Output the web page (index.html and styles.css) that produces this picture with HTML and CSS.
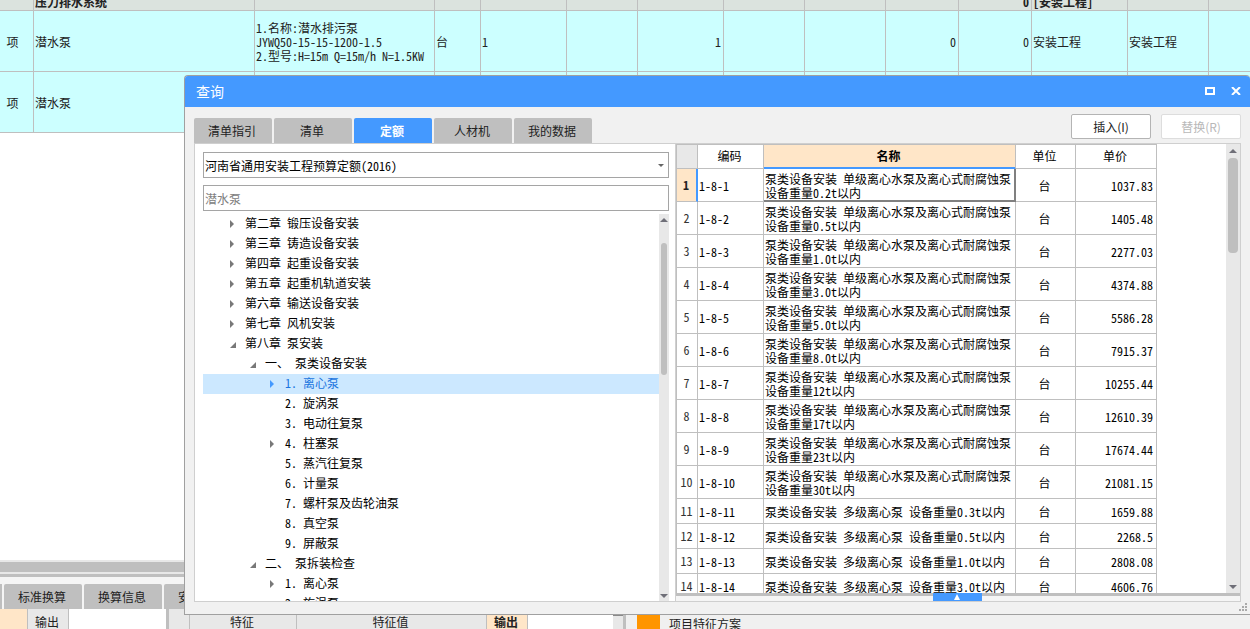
FILE: index.html
```html
<!DOCTYPE html>
<html lang="zh-CN">
<head>
<meta charset="utf-8">
<title>查询</title>
<link rel="stylesheet" href="styles.css">
</head>
<body>
<div class="app">
  <table class="sheet">
    <colgroup>
      <col class="w-kind"><col class="w-name"><col class="w-desc"><col class="w-unit"><col class="w-expr"><col class="w-qty"><col class="w-expr"><col class="w-price"><col class="w-price"><col class="w-sum"><col class="w-sum"><col class="w-major"><col class="w-price"><col>
    </colgroup>
    <tbody>
      <tr class="group"><td></td><td><div class="clip">压力排水系统</div></td><td></td><td></td><td></td><td></td><td></td><td></td><td></td><td></td><td><div class="clip end">0</div></td><td><div class="clip">[安装工程]</div></td><td></td><td></td></tr>
      <tr><td class="mid">项</td><td>潜水泵</td><td>1.名称:潜水排污泵<br>JYWQ50-15-15-1200-1.5<br>2.型号:H=15m Q=15m/h N=1.5KW</td><td>台</td><td>1</td><td></td><td class="right">1</td><td></td><td></td><td class="right">0</td><td class="right">0</td><td>安装工程</td><td>安装工程</td><td></td></tr>
      <tr><td class="mid">项</td><td>潜水泵</td><td></td><td></td><td></td><td></td><td></td><td></td><td></td><td></td><td></td><td></td><td></td><td></td></tr>
    </tbody>
  </table>
  <div class="blank"></div>
  <div class="splitbar"></div>
  <div class="dock-tabs">
    <span class="stub"></span>
    <button class="tab">标准换算</button>
    <button class="tab">换算信息</button>
    <button class="tab">安装费用</button>
  </div>
  <div class="dock">
    <div class="cell peach d-corner"></div>
    <div class="cell d-out">输出</div>
    <div class="d-space"></div>
    <div class="d-bar"></div>
    <div class="cell d-row"></div>
    <div class="cell d-feature">特征</div>
    <div class="cell d-value">特征值</div>
    <div class="cell peach d-export">输出</div>
    <div class="d-fill"></div>
    <div class="d-scroll"></div>
    <div class="d-bar"></div>
    <div class="d-plan"><i class="swatch"></i><span>项目特征方案</span></div>
  </div>
</div>

<section class="dialog" role="dialog" aria-labelledby="dlg-title">
  <header class="titlebar">
    <h1 id="dlg-title">查询</h1>
    <button class="win" aria-label="最大化"><svg width="10" height="8" viewBox="0 0 10 8"><path d="M1 1h8v6H1z" fill="none" stroke="#fff" stroke-width="2"/></svg></button>
    <button class="win" aria-label="关闭"><svg width="10" height="8" viewBox="0 0 10 8"><path d="M1 0l8 8M9 0L1 8" fill="none" stroke="#fff" stroke-width="2"/></svg></button>
  </header>
  <div class="toolbar">
    <nav class="tabs">
      <button class="tab">清单指引</button>
      <button class="tab">清单</button>
      <button class="tab active">定额</button>
      <button class="tab">人材机</button>
      <button class="tab">我的数据</button>
    </nav>
    <div class="actions">
      <button class="btn">插入(I)</button>
      <button class="btn" disabled>替换(R)</button>
    </div>
  </div>
  <div class="panel">
    <div class="left">
      <div class="combo">
        <select class="field" aria-label="定额库"><option>河南省通用安装工程预算定额(2016)</option></select>
        <svg class="caret" width="6" height="3" viewBox="0 0 6 3"><path d="M0 0h6L3 3z" fill="#666"/></svg>
      </div>
      <input class="field" type="text" placeholder="潜水泵" aria-label="搜索">
      <div class="tree-wrap">
        <ul class="tree">
          <li class="l0 shut">第二章 锻压设备安装</li>
          <li class="l0 shut">第三章 铸造设备安装</li>
          <li class="l0 shut">第四章 起重设备安装</li>
          <li class="l0 shut">第五章 起重机轨道安装</li>
          <li class="l0 shut">第六章 输送设备安装</li>
          <li class="l0 shut">第七章 风机安装</li>
          <li class="l0 open">第八章 泵安装</li>
          <li class="l1 open">一、 泵类设备安装</li>
          <li class="l2 shut selected">1. 离心泵</li>
          <li class="l2">2. 旋涡泵</li>
          <li class="l2">3. 电动往复泵</li>
          <li class="l2 shut">4. 柱塞泵</li>
          <li class="l2">5. 蒸汽往复泵</li>
          <li class="l2">6. 计量泵</li>
          <li class="l2">7. 螺杆泵及齿轮油泵</li>
          <li class="l2">8. 真空泵</li>
          <li class="l2">9. 屏蔽泵</li>
          <li class="l1 open">二、 泵拆装检查</li>
          <li class="l2 shut">1. 离心泵</li>
          <li class="l2">2. 旋涡泵</li>
        </ul>
        <div class="scroll narrow">
          <svg width="8" height="4" viewBox="0 0 8 4"><path d="M4 0l4 4H0z" fill="#6f6f78"/></svg>
          <div class="track"><i class="thumb tree-thumb"></i></div>
          <svg width="8" height="4" viewBox="0 0 8 4"><path d="M0 0h8L4 4z" fill="#6f6f78"/></svg>
        </div>
      </div>
    </div>
    <div class="right-pane">
      <div class="grid-wrap">
        <div class="grid-view">
          <table class="grid">
            <colgroup><col class="g-no"><col class="g-code"><col class="g-name"><col class="g-unit"><col class="g-price"></colgroup>
            <thead><tr><th class="corner"></th><th>编码</th><th class="current">名称</th><th>单位</th><th>单价</th></tr></thead>
            <tbody>
              <tr class="picked"><th>1</th><td>1-8-1</td><td class="focus">泵类设备安装 单级离心水泵及离心式耐腐蚀泵 设备重量0.2t以内</td><td>台</td><td>1037.83</td></tr>
              <tr><th>2</th><td>1-8-2</td><td>泵类设备安装 单级离心水泵及离心式耐腐蚀泵 设备重量0.5t以内</td><td>台</td><td>1405.48</td></tr>
              <tr><th>3</th><td>1-8-3</td><td>泵类设备安装 单级离心水泵及离心式耐腐蚀泵 设备重量1.0t以内</td><td>台</td><td>2277.03</td></tr>
              <tr><th>4</th><td>1-8-4</td><td>泵类设备安装 单级离心水泵及离心式耐腐蚀泵 设备重量3.0t以内</td><td>台</td><td>4374.88</td></tr>
              <tr><th>5</th><td>1-8-5</td><td>泵类设备安装 单级离心水泵及离心式耐腐蚀泵 设备重量5.0t以内</td><td>台</td><td>5586.28</td></tr>
              <tr><th>6</th><td>1-8-6</td><td>泵类设备安装 单级离心水泵及离心式耐腐蚀泵 设备重量8.0t以内</td><td>台</td><td>7915.37</td></tr>
              <tr><th>7</th><td>1-8-7</td><td>泵类设备安装 单级离心水泵及离心式耐腐蚀泵 设备重量12t以内</td><td>台</td><td>10255.44</td></tr>
              <tr><th>8</th><td>1-8-8</td><td>泵类设备安装 单级离心水泵及离心式耐腐蚀泵 设备重量17t以内</td><td>台</td><td>12610.39</td></tr>
              <tr><th>9</th><td>1-8-9</td><td>泵类设备安装 单级离心水泵及离心式耐腐蚀泵 设备重量23t以内</td><td>台</td><td>17674.44</td></tr>
              <tr><th>10</th><td>1-8-10</td><td>泵类设备安装 单级离心水泵及离心式耐腐蚀泵 设备重量30t以内</td><td>台</td><td>21081.15</td></tr>
              <tr class="short"><th>11</th><td>1-8-11</td><td>泵类设备安装 多级离心泵 设备重量0.3t以内</td><td>台</td><td>1659.88</td></tr>
              <tr class="short"><th>12</th><td>1-8-12</td><td>泵类设备安装 多级离心泵 设备重量0.5t以内</td><td>台</td><td>2268.5</td></tr>
              <tr class="short"><th>13</th><td>1-8-13</td><td>泵类设备安装 多级离心泵 设备重量1.0t以内</td><td>台</td><td>2808.08</td></tr>
              <tr class="short"><th>14</th><td>1-8-14</td><td>泵类设备安装 多级离心泵 设备重量3.0t以内</td><td>台</td><td>4606.76</td></tr>
            </tbody>
          </table>
        </div>
        <div class="scroll wide">
          <svg width="8" height="4" viewBox="0 0 8 4"><path d="M4 0l4 4H0z" fill="#6f6f78"/></svg>
          <div class="track"><i class="thumb grid-thumb"></i></div>
          <svg width="8" height="4" viewBox="0 0 8 4"><path d="M0 0h8L4 4z" fill="#6f6f78"/></svg>
        </div>
      </div>
      <div class="drawer">
        <button class="handle" aria-label="展开"><svg width="6" height="6" viewBox="0 0 6 6"><path d="M3 0l3 6H0z" fill="#fff"/></svg></button>
      </div>
    </div>
  </div>
  <svg class="grip" width="8" height="8" viewBox="0 0 8 8"><path d="M6 0h2v2H6zM3 3h2v2H3zM6 3h2v2H6zM0 6h2v2H0zM3 6h2v2H3zM6 6h2v2H6z" fill="#aaa"/></svg>
</section>
</body>
</html>
```
FILE: styles.css
```css
* { box-sizing: border-box; }

html, body { height: 100%; }

body {
  margin: 0;
  overflow: hidden;
  background: #fff;
  color: #222;
  font: 12px/14px "Noto Sans Mono CJK SC", "Noto Sans CJK SC", "Liberation Mono", monospace;
}

button, input, select { font: inherit; color: inherit; }
button { padding: 0; border: 0; background: none; }
svg { display: block; flex: none; }

.app { display: flex; flex-direction: column; height: 100%; }

/* bill of quantities */
.sheet {
  width: 100%;
  table-layout: fixed;
  border-collapse: separate;
  border-spacing: 0;
  background: #ccffff;
}
.sheet td {
  height: 61px;
  padding: 2px 2px 0 1px;
  border-right: 1px solid #bfbfbf;
  border-bottom: 1px solid #bfbfbf;
  white-space: nowrap;
}
.sheet td:last-child { border-right: 0; }
.sheet .group td { height: 11px; padding-top: 0; background: #dbe3de; font-weight: bold; }
.sheet .mid { text-align: center; padding-right: 9px; }
.sheet .right { text-align: right; }
.clip { display: flex; align-items: flex-end; height: 10px; padding-bottom: 1px; overflow: hidden; }
.clip.end { justify-content: flex-end; }
.w-kind { width: 34px; }
.w-name { width: 221px; }
.w-desc { width: 180px; }
.w-unit { width: 46px; }
.w-expr { width: 86px; }
.w-qty { width: 71px; }
.w-price { width: 81px; }
.w-sum { width: 73px; }
.w-major { width: 96px; }

.blank { flex: 1; }
.splitbar {
  height: 17px;
  flex: none;
  background: linear-gradient(#e8e8e8 2px, #bfbfbf 2px 12px, #e8e8e8 12px 14px, #bfbfbf 14px);
}

.tab {
  width: 78px;
  height: 25px;
  padding-right: 2px;
  border-radius: 2px 2px 0 0;
  background: #bfbfbf;
  text-align: center;
}
.tab.active { background: #4499ff; color: #fff; font-weight: bold; }

.dock-tabs { display: flex; gap: 2px; padding-top: 7px; background: #f5f5f5; flex: none; }
.dock-tabs .stub { width: 2px; background: #bfbfbf; }

.dock { display: flex; height: 20px; flex: none; background: #f0f0f0; }
.cell {
  padding: 6px 2px 0 0;
  border-right: 1px solid #bfbfbf;
  background: #e8e8e8;
  text-align: center;
}
.cell.peach { background: #ffe6c8; font-weight: bold; }
.d-corner { width: 28px; }
.d-out { width: 41px; }
.d-space { width: 97px; background: #fff; }
.d-bar { width: 3px; background: #bfbfbf; }
.d-row { width: 21px; }
.d-feature { width: 107px; }
.d-value { width: 190px; }
.d-export { width: 41px; }
.d-fill { width: 85px; background: #fff; }
.d-scroll { width: 10px; border-top: 7px solid #8a8a8a; background: #e8e8e8; }
.d-plan { display: flex; flex: 1; gap: 9px; padding-left: 11px; }
.d-plan span { padding-top: 8px; }
.swatch { width: 23px; background: #ff9500; }

/* query window */
.dialog {
  position: absolute;
  inset: 75px 0 14px 184px;
  display: flex;
  flex-direction: column;
  padding-bottom: 12px;
  border: 1px solid #a0a0a0;
  border-right: 0;
  border-radius: 4px 4px 0 0;
  background: #f1f1f1;
  overflow: hidden;
}
.titlebar {
  display: flex;
  align-items: center;
  gap: 10px;
  height: 31px;
  flex: none;
  padding: 0 6px 2px 11px;
  background: #4499ff;
  color: #fff;
}
.titlebar h1 { flex: 1; margin: 0; font-size: 14px; font-weight: normal; }
.win { display: grid; place-items: center; width: 16px; height: 16px; }

.toolbar { display: flex; justify-content: space-between; padding: 7px 9px 0; height: 36px; flex: none; }
.tabs { display: flex; gap: 2px; padding-top: 4px; }
.actions { display: flex; gap: 10px; }
.btn {
  width: 80px;
  height: 25px;
  border: 1px solid #b4b4b4;
  border-radius: 2px;
  background: #fff;
  font-family: "Noto Sans CJK SC", sans-serif;
}
.btn:disabled { border-color: #ddd; color: #b8b8b8; }

.panel {
  display: flex;
  flex: 1;
  min-height: 0;
  margin: 0 9px;
  border: 1px solid #cfcfcf;
  background: #fff;
  color: #000;
}
.left { display: flex; flex-direction: column; width: 481px; flex: none; padding: 8px 6px 0 8px; border-right: 1px solid #d0d0d0; }
.field {
  width: 100%;
  height: 26px;
  padding: 1px 2px 0 1px;
  border: 1px solid #a5a5a5;
  border-radius: 0;
  background: #fff;
  appearance: none;
  outline: 0;
}
.field::placeholder { color: #808080; }
.combo { display: flex; position: relative; margin-bottom: 7px; }
.caret { position: absolute; right: 5px; top: 12px; }
input.field { flex: none; }

.tree-wrap { display: flex; flex: 1; min-height: 0; padding-top: 3px; }
.tree { flex: 1; margin: 0; padding: 0; overflow: hidden; list-style: none; }
.tree li { display: flex; align-items: center; height: 20px; padding-bottom: 2px; white-space: pre; }
.tree li::before { content: ""; width: 6px; height: 8px; margin: 2px 9px 0 0; flex: none; }
.tree .shut::before { background: #787878; clip-path: polygon(0 0, 4px 4px, 0 8px); }
.tree .open::before { background: #787878; clip-path: polygon(6px 2px, 6px 8px, 0 8px); }
.tree .l0 { padding-left: 27px; }
.tree .l1 { padding-left: 47px; }
.tree .l2 { padding-left: 67px; }
.tree .selected { background: #cce8ff; color: #1a75e0; }
.tree .selected::before { background: #4499ff; }

.scroll { display: flex; flex-direction: column; align-items: center; padding: 4px 0; background: #e8e8e8; flex: none; }
.scroll.narrow { width: 10px; padding-bottom: 3px; }
.scroll.wide { width: 14px; padding-top: 5px; }
.track { display: flex; justify-content: center; flex: 1; }
.thumb { border-radius: 4px; background: #bfbfbf; }
.tree-thumb { width: 6px; height: 132px; margin-top: 21px; }
.grid-thumb { width: 10px; height: 95px; margin-top: 5px; }

.right-pane { display: flex; flex: 1; flex-direction: column; min-width: 0; }
.grid-wrap { display: flex; flex: 1; min-height: 0; }
.grid-view { flex: 1; overflow: hidden; }
.grid {
  width: 481px;
  table-layout: fixed;
  border-collapse: separate;
  border-spacing: 0;
  border-left: 1px solid #bfbfbf;
}
.grid th, .grid td {
  height: 33px;
  padding: 2px 3px 0 1px;
  border-right: 1px solid #bfbfbf;
  border-bottom: 1px solid #bfbfbf;
  font-weight: normal;
}
.grid thead th { height: 25px; padding-top: 0; padding-bottom: 1px; border-top: 1px solid #bfbfbf; }
.grid .short th, .grid .short td { height: 25px; }
.grid tbody th { padding: 0 1px 0 0; color: #333; }
.grid td:nth-child(4) { text-align: center; }
.grid td:nth-child(5) { text-align: right; }
.grid .corner { background: #e8e8e8; }
.grid thead .current { background: #ffe6c8; border-bottom-color: #4499ff; box-shadow: inset 0 -1px #4499ff; font-weight: bold; }
.grid .picked th { background: #ffe6c8; border-right: 2px solid #4499ff; font-weight: bold; color: #222; }
.grid .focus { border-color: #808080; box-shadow: inset -1px -1px #808080; }
.g-no { width: 21px; }
.g-code { width: 66px; }
.g-name { width: 252px; }
.g-unit { width: 60px; }
.g-price { width: 81px; }

.drawer { display: flex; justify-content: center; height: 8px; padding-right: 2px; flex: none; background: linear-gradient(#bfbfbf 3px, #f5f5f5 3px); }
.handle { display: grid; place-items: center; width: 49px; height: 8px; background: #4499ff; }

.grip { position: absolute; right: 3px; bottom: 3px; }
```
